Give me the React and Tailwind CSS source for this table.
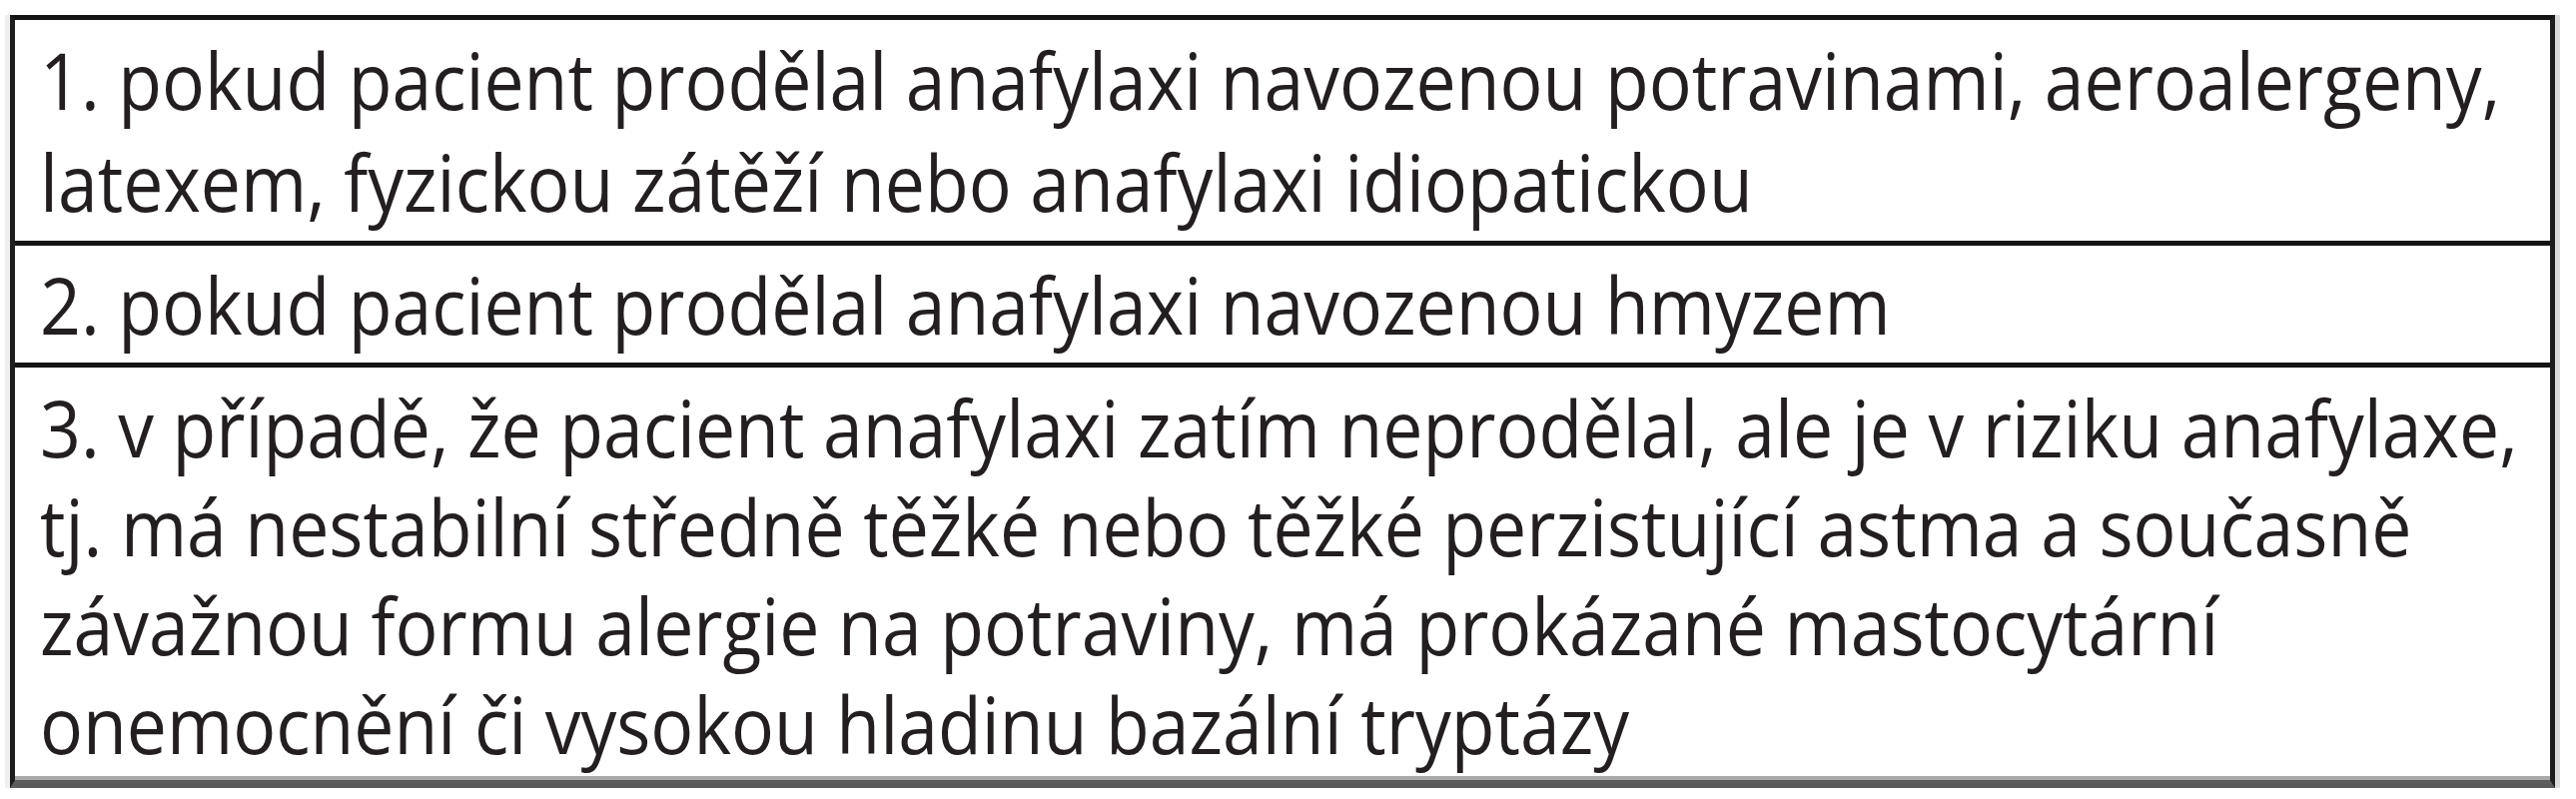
const rows = [
  {
    h: "h-[221px] pt-[9px] leading-[102px]",
    lines: [
      "1. pokud pacient prodělal anafylaxi navozenou potravinami, aeroalergeny,",
      "latexem, fyzickou zátěží nebo anafylaxi idiopatickou",
    ],
  },
  {
    h: "h-[122px] pt-[8px] leading-[102px] border-t-[5px] border-t-[#141414]",
    lines: ["2. pokud pacient prodělal anafylaxi navozenou hmyzem"],
  },
  {
    h: "h-[418px] pt-[10px] leading-[99px] border-t-[5px] border-t-[#141414]",
    lines: [
      "3. v případě, že pacient anafylaxi zatím neprodělal, ale je v riziku anafylaxe,",
      "tj. má nestabilní středně těžké nebo těžké perzistující astma a současně",
      "závažnou formu alergie na potraviny, má prokázané mastocytární",
      "onemocnění či vysokou hladinu bazální tryptázy",
    ],
  },
];

export default function App() {
  return (
    <div className="w-[2579px] h-[800px] bg-white pt-[15px] pl-[10px]">
      <div className="w-[2548px] border-x-[5px] border-t-[5px] border-x-[#1e1e1e] border-t-[#141414] border-b-[8px] border-b-[#5c5c5c] shadow-[inset_0_-4px_0_#a9a9a9,5px_0_0_#dcdcdc,-5px_0_0_#efefef] flex flex-col font-['Open_Sans',sans-serif] text-[79px] text-[#231f20]">
        {rows.map((r, i) => (
          <div key={i} className={`overflow-hidden pl-[25px] ${r.h}`}>
            {r.lines.map((l, j) => (
              <div key={j} className="whitespace-nowrap origin-left scale-x-[0.905]">
                {l}
              </div>
            ))}
          </div>
        ))}
      </div>
    </div>
  );
}
